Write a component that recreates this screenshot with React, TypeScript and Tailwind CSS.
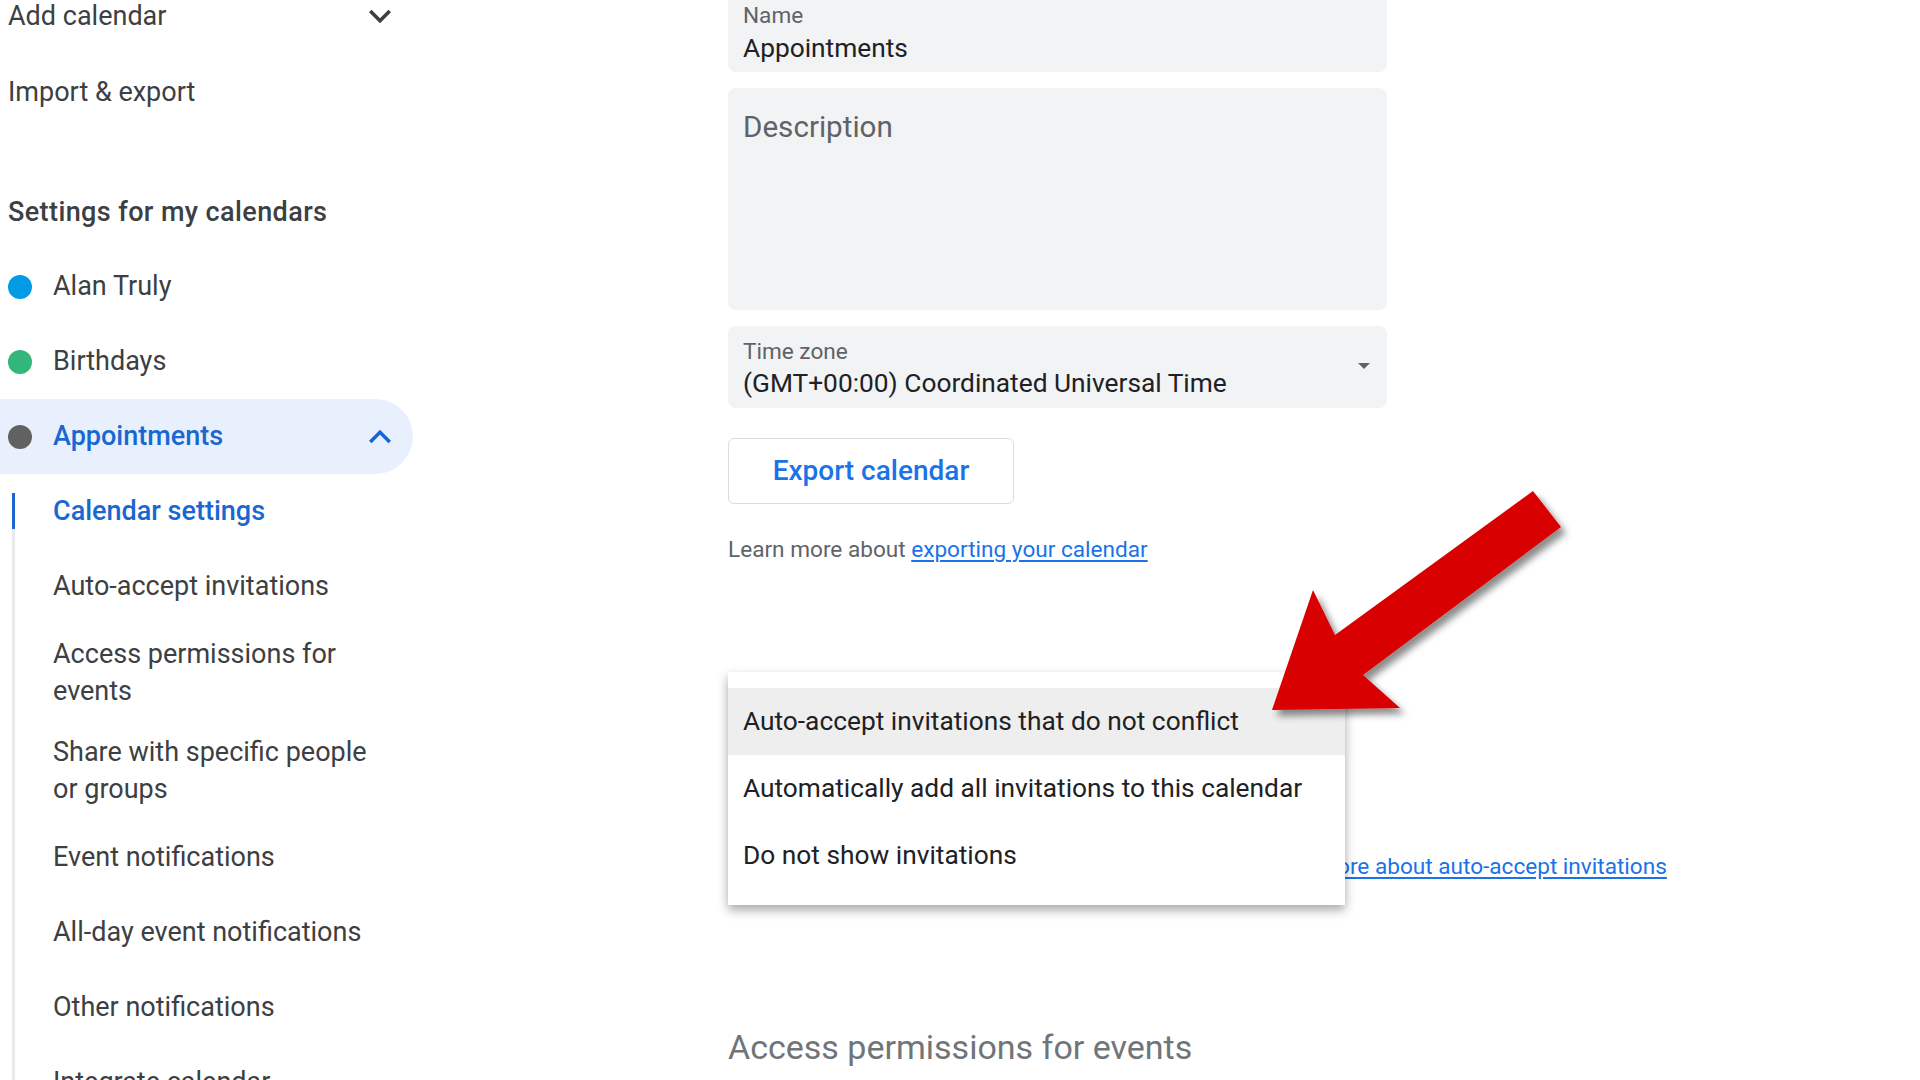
import React from "react";

function ChevronDown() {
  return (
    <svg width="44" height="44" viewBox="0 0 24 24" className="shrink-0">
      <path d="M7.41 8.59 12 13.17l4.59-4.58L18 10l-6 6-6-6z" fill="#3c4043" />
    </svg>
  );
}

function ChevronUp() {
  return (
    <svg width="44" height="44" viewBox="0 0 24 24" className="shrink-0">
      <path d="M7.41 15.41 12 10.83l4.59 4.58L18 14l-6-6-6 6z" fill="#1967d2" />
    </svg>
  );
}

function CalRow({ color, label }: { color: string; label: string }) {
  return (
    <div className="flex h-[75px] items-center pl-[8px]">
      <span className="h-[24px] w-[24px] shrink-0 rounded-full" style={{ backgroundColor: color }} />
      <span className="ml-[21px] text-[27px] text-[#3c4043]">{label}</span>
    </div>
  );
}

function SubItem({ children, two }: { children: React.ReactNode; two?: boolean }) {
  return (
    <div
      className={
        two
          ? "border-l-[3px] border-[#e8eaed] py-[12px] pl-[38px]"
          : "flex h-[75px] items-center border-l-[3px] border-[#e8eaed] pl-[38px]"
      }
    >
      <span className="block max-w-[330px] text-[27px] leading-[37px] text-[#3c4043]">{children}</span>
    </div>
  );
}

function Sidebar() {
  return (
    <div className="w-[432px] shrink-0">
      <div className="flex h-[32px] w-[402px] items-center pl-[8px]">
        <span className="text-[27px] leading-[32px] text-[#3c4043]">Add calendar</span>
        <span className="ml-auto flex items-center">
          <ChevronDown />
        </span>
      </div>
      <div className="mt-[23px] flex h-[75px] items-center pl-[8px]">
        <span className="text-[27px] text-[#3c4043]">Import &amp; export</span>
      </div>
      <div className="h-[119px] pl-[8px] pt-[66px]">
        <span className="block text-[27px] font-medium leading-[32px] tracking-[0.4px] text-[#3c4043]">
          Settings for my calendars
        </span>
      </div>
      <CalRow color="#039be5" label="Alan Truly" />
      <CalRow color="#33b679" label="Birthdays" />
      <div className="flex h-[75px] w-[413px] items-center rounded-r-full bg-[#e8f0fe] pl-[8px] pr-[11px]">
        <span className="h-[24px] w-[24px] shrink-0 rounded-full bg-[#616161]" />
        <span className="ml-[21px] text-[27px] font-medium text-[#1967d2]">Appointments</span>
        <span className="ml-auto flex items-center">
          <ChevronUp />
        </span>
      </div>
      <div className="ml-[12px]">
        <div className="flex h-[75px] items-stretch">
          <div className="flex w-[3px] flex-col">
            <div className="h-[19px]" />
            <div className="h-[36px] bg-[#1967d2]" />
            <div className="flex-1 bg-[#e8eaed]" />
          </div>
          <div className="flex items-center pl-[38px]">
            <span className="text-[27px] font-medium text-[#1967d2]">Calendar settings</span>
          </div>
        </div>
        <SubItem>Auto-accept invitations</SubItem>
        <SubItem two>Access permissions for events</SubItem>
        <SubItem two>Share with specific people or groups</SubItem>
        <SubItem>Event notifications</SubItem>
        <SubItem>All-day event notifications</SubItem>
        <SubItem>Other notifications</SubItem>
        <SubItem>Integrate calendar</SubItem>
      </div>
    </div>
  );
}

function Content() {
  return (
    <div className="w-[659px] shrink-0">
      <div className="h-[72px] rounded-b-[8px] bg-[#f1f3f4] px-[15px] pt-[3px]">
        <div className="text-[22.6px] leading-[26px] text-[#5f6368]">Name</div>
        <div className="mt-[4px] text-[26.3px] leading-[30px] text-[#202124]">Appointments</div>
      </div>
      <div className="mt-[16px] h-[222px] rounded-[8px] bg-[#f1f3f4] px-[15px] pt-[21px]">
        <div className="text-[29.6px] leading-[36px] text-[#5f6368]">Description</div>
      </div>
      <div className="mt-[16px] flex h-[82px] rounded-[8px] bg-[#f1f3f4] pl-[15px] pr-[16px] pt-[13px]">
        <div className="flex-1">
          <div className="text-[22.6px] leading-[26px] text-[#5f6368]">Time zone</div>
          <div className="mt-[2px] text-[26.3px] leading-[32px] text-[#202124]">
            (GMT+00:00) Coordinated Universal Time
          </div>
        </div>
        <svg width="14" height="8" viewBox="0 0 14 8" className="mt-[23px] shrink-0">
          <path d="M1 1h12L7 7z" fill="#5f6368" />
        </svg>
      </div>
      <div className="mt-[30px] flex h-[66px] w-[286px] items-center justify-center rounded-[6px] border border-[#dadce0]">
        <span className="text-[28px] font-medium text-[#1a73e8]">Export calendar</span>
      </div>
      <div className="mt-[32px] text-[22.6px] leading-[28px] text-[#5f6368]">
        Learn more about{" "}
        <span className="text-[#1a73e8] underline underline-offset-[3px]">exporting your calendar</span>
      </div>
      <div className="mt-[270px] flex h-[66px] items-center">
        <div className="h-[66px] w-[503px] shrink-0 rounded-[8px] bg-[#f1f3f4]" />
        <span className="ml-[24px] whitespace-nowrap text-[22.6px] leading-[28px] text-[#1a73e8] underline underline-offset-[3px]">
          Learn more about auto-accept invitations
        </span>
      </div>
      <div className="mt-[127px] text-[34px] leading-[40px] text-[#70757a]">Access permissions for events</div>
    </div>
  );
}

function Menu() {
  const items = [
    "Auto-accept invitations that do not conflict",
    "Automatically add all invitations to this calendar",
    "Do not show invitations",
  ];
  return (
    <div className="absolute left-[728px] top-[672px] w-[617px] bg-white py-[16px] shadow-[0_5px_10px_rgba(0,0,0,0.35)]">
      {items.map((t, i) => (
        <div
          key={t}
          className={
            i === 0
              ? "flex h-[67px] items-center bg-[#eeeeee] px-[15px] text-[26.3px] text-[#202124]"
              : "flex h-[67px] items-center px-[15px] text-[26.3px] text-[#202124]"
          }
        >
          {t}
        </div>
      ))}
    </div>
  );
}

function Arrow() {
  return (
    <svg
      className="absolute left-[1240px] top-[470px]"
      width="360"
      height="280"
      viewBox="0 0 360 280"
    >
      <defs>
        <filter id="sh" x="-20%" y="-20%" width="140%" height="140%">
          <feDropShadow dx="5" dy="6" stdDeviation="3.5" floodColor="#000" floodOpacity="0.45" />
        </filter>
      </defs>
      <polygon
        points="32,240 73,120 95,165 293,21 321,57 123,205 160,238"
        fill="#d80000"
        filter="url(#sh)"
      />
    </svg>
  );
}

export default function App() {
  return (
    <div className="relative h-[1080px] w-[1920px] overflow-hidden bg-white [font-family:Roboto,'Liberation_Sans',sans-serif]">
      <div className="flex">
        <Sidebar />
        <div className="pl-[296px]">
          <Content />
        </div>
      </div>
      <Menu />
      <Arrow />
    </div>
  );
}
